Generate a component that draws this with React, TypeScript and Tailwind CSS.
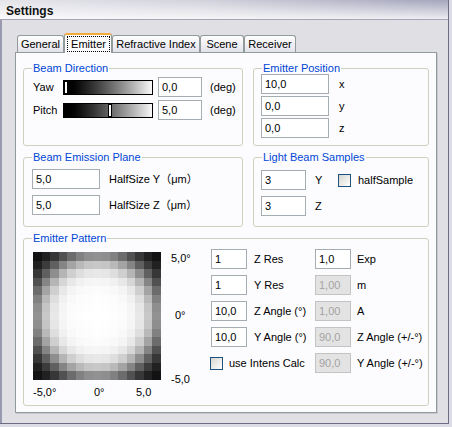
import React from "react";

function cx(...a: (string | false | undefined | null)[]) {
  return a.filter(Boolean).join(" ");
}

function Field({ v, w, off, className }: { v: string; w: string; off?: boolean; className?: string }) {
  return (
    <div
      className={cx(
        "flex h-[20px] shrink-0 items-center border pl-[3px]",
        w,
        off ? "border-[#c3c3c3] bg-[#e3e3e3] text-[#a3a3a3]" : "border-[#a5acb2] bg-white text-black",
        className
      )}
    >
      {v}
    </div>
  );
}

function Slider({ pos }: { pos: number }) {
  return (
    <div className="relative h-[15px] w-[90px] shrink-0 border border-black bg-linear-to-r from-black to-[#f8f8f8]">
      <div className="absolute top-0 bottom-0 w-[4px] border border-black bg-white" style={{ left: pos }} />
    </div>
  );
}

function Check() {
  return <div className="h-[13px] w-[13px] shrink-0 border border-[#1c5180] bg-linear-to-br from-[#d6d6d0] to-white" />;
}

function Tab({ w, children }: { w: string; children: React.ReactNode }) {
  return (
    <div
      className={cx(
        "flex h-[17px] items-center justify-center rounded-t-[3px] border-x border-t border-[#919b9c] bg-linear-to-b from-white to-[#e2e2ea] pt-[1px]",
        w
      )}
    >
      {children}
    </div>
  );
}

function Group({ title, className, children }: { title: string; className: string; children?: React.ReactNode }) {
  return (
    <div className={cx("rounded-[3px] border border-[#d0d0bf]", className)}>
      <div className="-mt-[7px] -mb-[6px] ml-[8px] h-[13px] w-fit bg-[#fcfcfe] px-[1px] leading-[13px] text-[#0046d5]">
        {title}
      </div>
      {children}
    </div>
  );
}

function Pattern() {
  const cells: React.ReactNode[] = [];
  for (let r = 0; r < 15; r++) {
    for (let c = 0; c < 15; c++) {
      const d = Math.hypot(r - 7, c - 7);
      const I = 1 / (1 + Math.exp((d - 7.3) / 1.0));
      const g = Math.round(I * 255);
      cells.push(<rect key={r * 15 + c} x={c} y={r} width={1.02} height={1.02} fill={`rgb(${g},${g},${g})`} />);
    }
  }
  return (
    <svg width={128} height={128} viewBox="0 0 15 15" preserveAspectRatio="none" shapeRendering="crispEdges" className="block shrink-0">
      {cells}
    </svg>
  );
}

export default function App() {
  return (
    <div className="h-[427px] w-[452px] overflow-hidden bg-[#dcdce6] font-['Liberation_Sans','Noto_Sans_CJK_JP',sans-serif] text-[11px] leading-[13px] text-black">
      <div className="flex h-[424px] w-[449px] flex-col border-r border-b border-[#6c6c84]">
        {/* title bar */}
        <div className="flex h-[20px] shrink-0 items-center border-b border-[#a4a4b6] bg-[linear-gradient(to_bottom,rgba(255,255,255,0)_0%,rgba(255,255,255,0.8)_100%),linear-gradient(to_right,#e4e4ea_0%,#d2d2dc_45%,#a4a4bc_100%)] pt-[3px] pl-[6px] text-[12px] font-bold text-[#111]">
          Settings
        </div>
        {/* body */}
        <div className="flex flex-1 flex-col border-l-2 border-[#9999b0] bg-[#e0dfe3] pt-[13px] pl-[13px]">
          {/* tabs */}
          <div className="flex h-[19px] items-end pl-[2px]">
            <Tab w="w-[47px]">General</Tab>
            <div className="relative z-10 -mb-[1px] flex h-[20px] w-[48px] flex-col rounded-t-[3px] border-x border-t-2 border-x-[#919b9c] border-t-[#f2ac3a] bg-[#fcfcfe]">
              <div className="mt-[1px] mr-[1px] ml-[2px] flex h-[16px] items-center justify-center border border-dotted border-black">
                Emitter
              </div>
            </div>
            <Tab w="w-[88px]">Refractive Index</Tab>
            <Tab w="w-[44px]">Scene</Tab>
            <Tab w="w-[52px]">Receiver</Tab>
          </div>
          {/* panel */}
          <div className="flex h-[361px] w-[422px] flex-col border border-[#919b9c] bg-[#fcfcfe] pt-[15px] pl-[7px] shadow-[1px_1px_0_#c8c8d2]">
            {/* row 1 */}
            <div className="flex gap-[10px]">
              <Group title="Beam Direction" className="h-[78px] w-[220px]">
                <div className="flex flex-col gap-[3px] pt-[8px] pl-[9px]">
                  <div className="flex h-[20px] items-center">
                    <span className="w-[30px]">Yaw</span>
                    <Slider pos={0} />
                    <Field v="0,0" w="w-[44px]" className="ml-[5px]" />
                    <span className="ml-[8px]">(deg)</span>
                  </div>
                  <div className="flex h-[20px] items-center">
                    <span className="w-[30px]">Pitch</span>
                    <Slider pos={44} />
                    <Field v="5,0" w="w-[44px]" className="ml-[5px]" />
                    <span className="ml-[8px]">(deg)</span>
                  </div>
                </div>
              </Group>
              <Group title="Emitter Position" className="h-[78px] w-[176px]">
                <div className="flex flex-col gap-[2px] pt-[5px] pl-[7px]">
                  <div className="flex h-[20px] items-center">
                    <Field v="10,0" w="w-[68px]" />
                    <span className="ml-[10px]">x</span>
                  </div>
                  <div className="flex h-[20px] items-center">
                    <Field v="0,0" w="w-[68px]" />
                    <span className="ml-[10px]">y</span>
                  </div>
                  <div className="flex h-[20px] items-center">
                    <Field v="0,0" w="w-[68px]" />
                    <span className="ml-[10px]">z</span>
                  </div>
                </div>
              </Group>
            </div>
            {/* row 2 */}
            <div className="mt-[11px] flex gap-[10px]">
              <Group title="Beam Emission Plane" className="h-[70px] w-[220px]">
                <div className="flex flex-col gap-[6px] pt-[11px] pl-[8px]">
                  <div className="flex h-[20px] items-center">
                    <Field v="5,0" w="w-[68px]" />
                    <span className="ml-[9px]">HalfSize Y（μm）</span>
                  </div>
                  <div className="flex h-[20px] items-center">
                    <Field v="5,0" w="w-[68px]" />
                    <span className="ml-[9px]">HalfSize Z（μm）</span>
                  </div>
                </div>
              </Group>
              <Group title="Light Beam Samples" className="h-[70px] w-[176px]">
                <div className="flex flex-col gap-[6px] pt-[12px] pl-[7px]">
                  <div className="flex h-[20px] items-center">
                    <Field v="3" w="w-[45px]" />
                    <span className="ml-[9px] w-[23px]">Y</span>
                    <Check />
                    <span className="ml-[7px]">halfSample</span>
                  </div>
                  <div className="flex h-[20px] items-center">
                    <Field v="3" w="w-[45px]" />
                    <span className="ml-[9px]">Z</span>
                  </div>
                </div>
              </Group>
            </div>
            {/* row 3 */}
            <Group title="Emitter Pattern" className="mt-[11px] h-[168px] w-[406px]">
              <div className="flex pl-[9px]">
                <div className="flex w-[178px] shrink-0 flex-col pt-[13px]">
                  <div className="flex">
                    <Pattern />
                    <div className="ml-[10px] flex flex-col">
                      <span>5,0°</span>
                      <span className="mt-[44px] pl-[4px]">0°</span>
                      <span className="mt-[51px]">-5,0</span>
                    </div>
                  </div>
                  <div className="flex">
                    <span className="w-[61px]">-5,0°</span>
                    <span className="w-[42px]">0°</span>
                    <span>5,0</span>
                  </div>
                </div>
                <div className="flex flex-col gap-[6px] pt-[10px]">
                  <div className="flex h-[20px] items-center">
                    <div className="flex w-[104px] items-center">
                      <Field v="1" w="w-[36px]" />
                      <span className="ml-[7px]">Z Res</span>
                    </div>
                    <Field v="1,0" w="w-[36px]" />
                    <span className="ml-[6px]">Exp</span>
                  </div>
                  <div className="flex h-[20px] items-center">
                    <div className="flex w-[104px] items-center">
                      <Field v="1" w="w-[36px]" />
                      <span className="ml-[7px]">Y Res</span>
                    </div>
                    <Field v="1,00" w="w-[36px]" off />
                    <span className="ml-[6px]">m</span>
                  </div>
                  <div className="flex h-[20px] items-center">
                    <div className="flex w-[104px] items-center">
                      <Field v="10,0" w="w-[36px]" />
                      <span className="ml-[7px]">Z Angle (°)</span>
                    </div>
                    <Field v="1,00" w="w-[36px]" off />
                    <span className="ml-[6px]">A</span>
                  </div>
                  <div className="flex h-[20px] items-center">
                    <div className="flex w-[104px] items-center">
                      <Field v="10,0" w="w-[36px]" />
                      <span className="ml-[7px]">Y Angle (°)</span>
                    </div>
                    <Field v="90,0" w="w-[36px]" off />
                    <span className="ml-[6px]">Z Angle (+/-°)</span>
                  </div>
                  <div className="flex h-[20px] items-center">
                    <div className="-ml-[1px] flex w-[105px] items-center">
                      <Check />
                      <span className="ml-[6px]">use Intens Calc</span>
                    </div>
                    <Field v="90,0" w="w-[36px]" off />
                    <span className="ml-[6px]">Y Angle (+/-°)</span>
                  </div>
                </div>
              </div>
            </Group>
          </div>
        </div>
      </div>
    </div>
  );
}
